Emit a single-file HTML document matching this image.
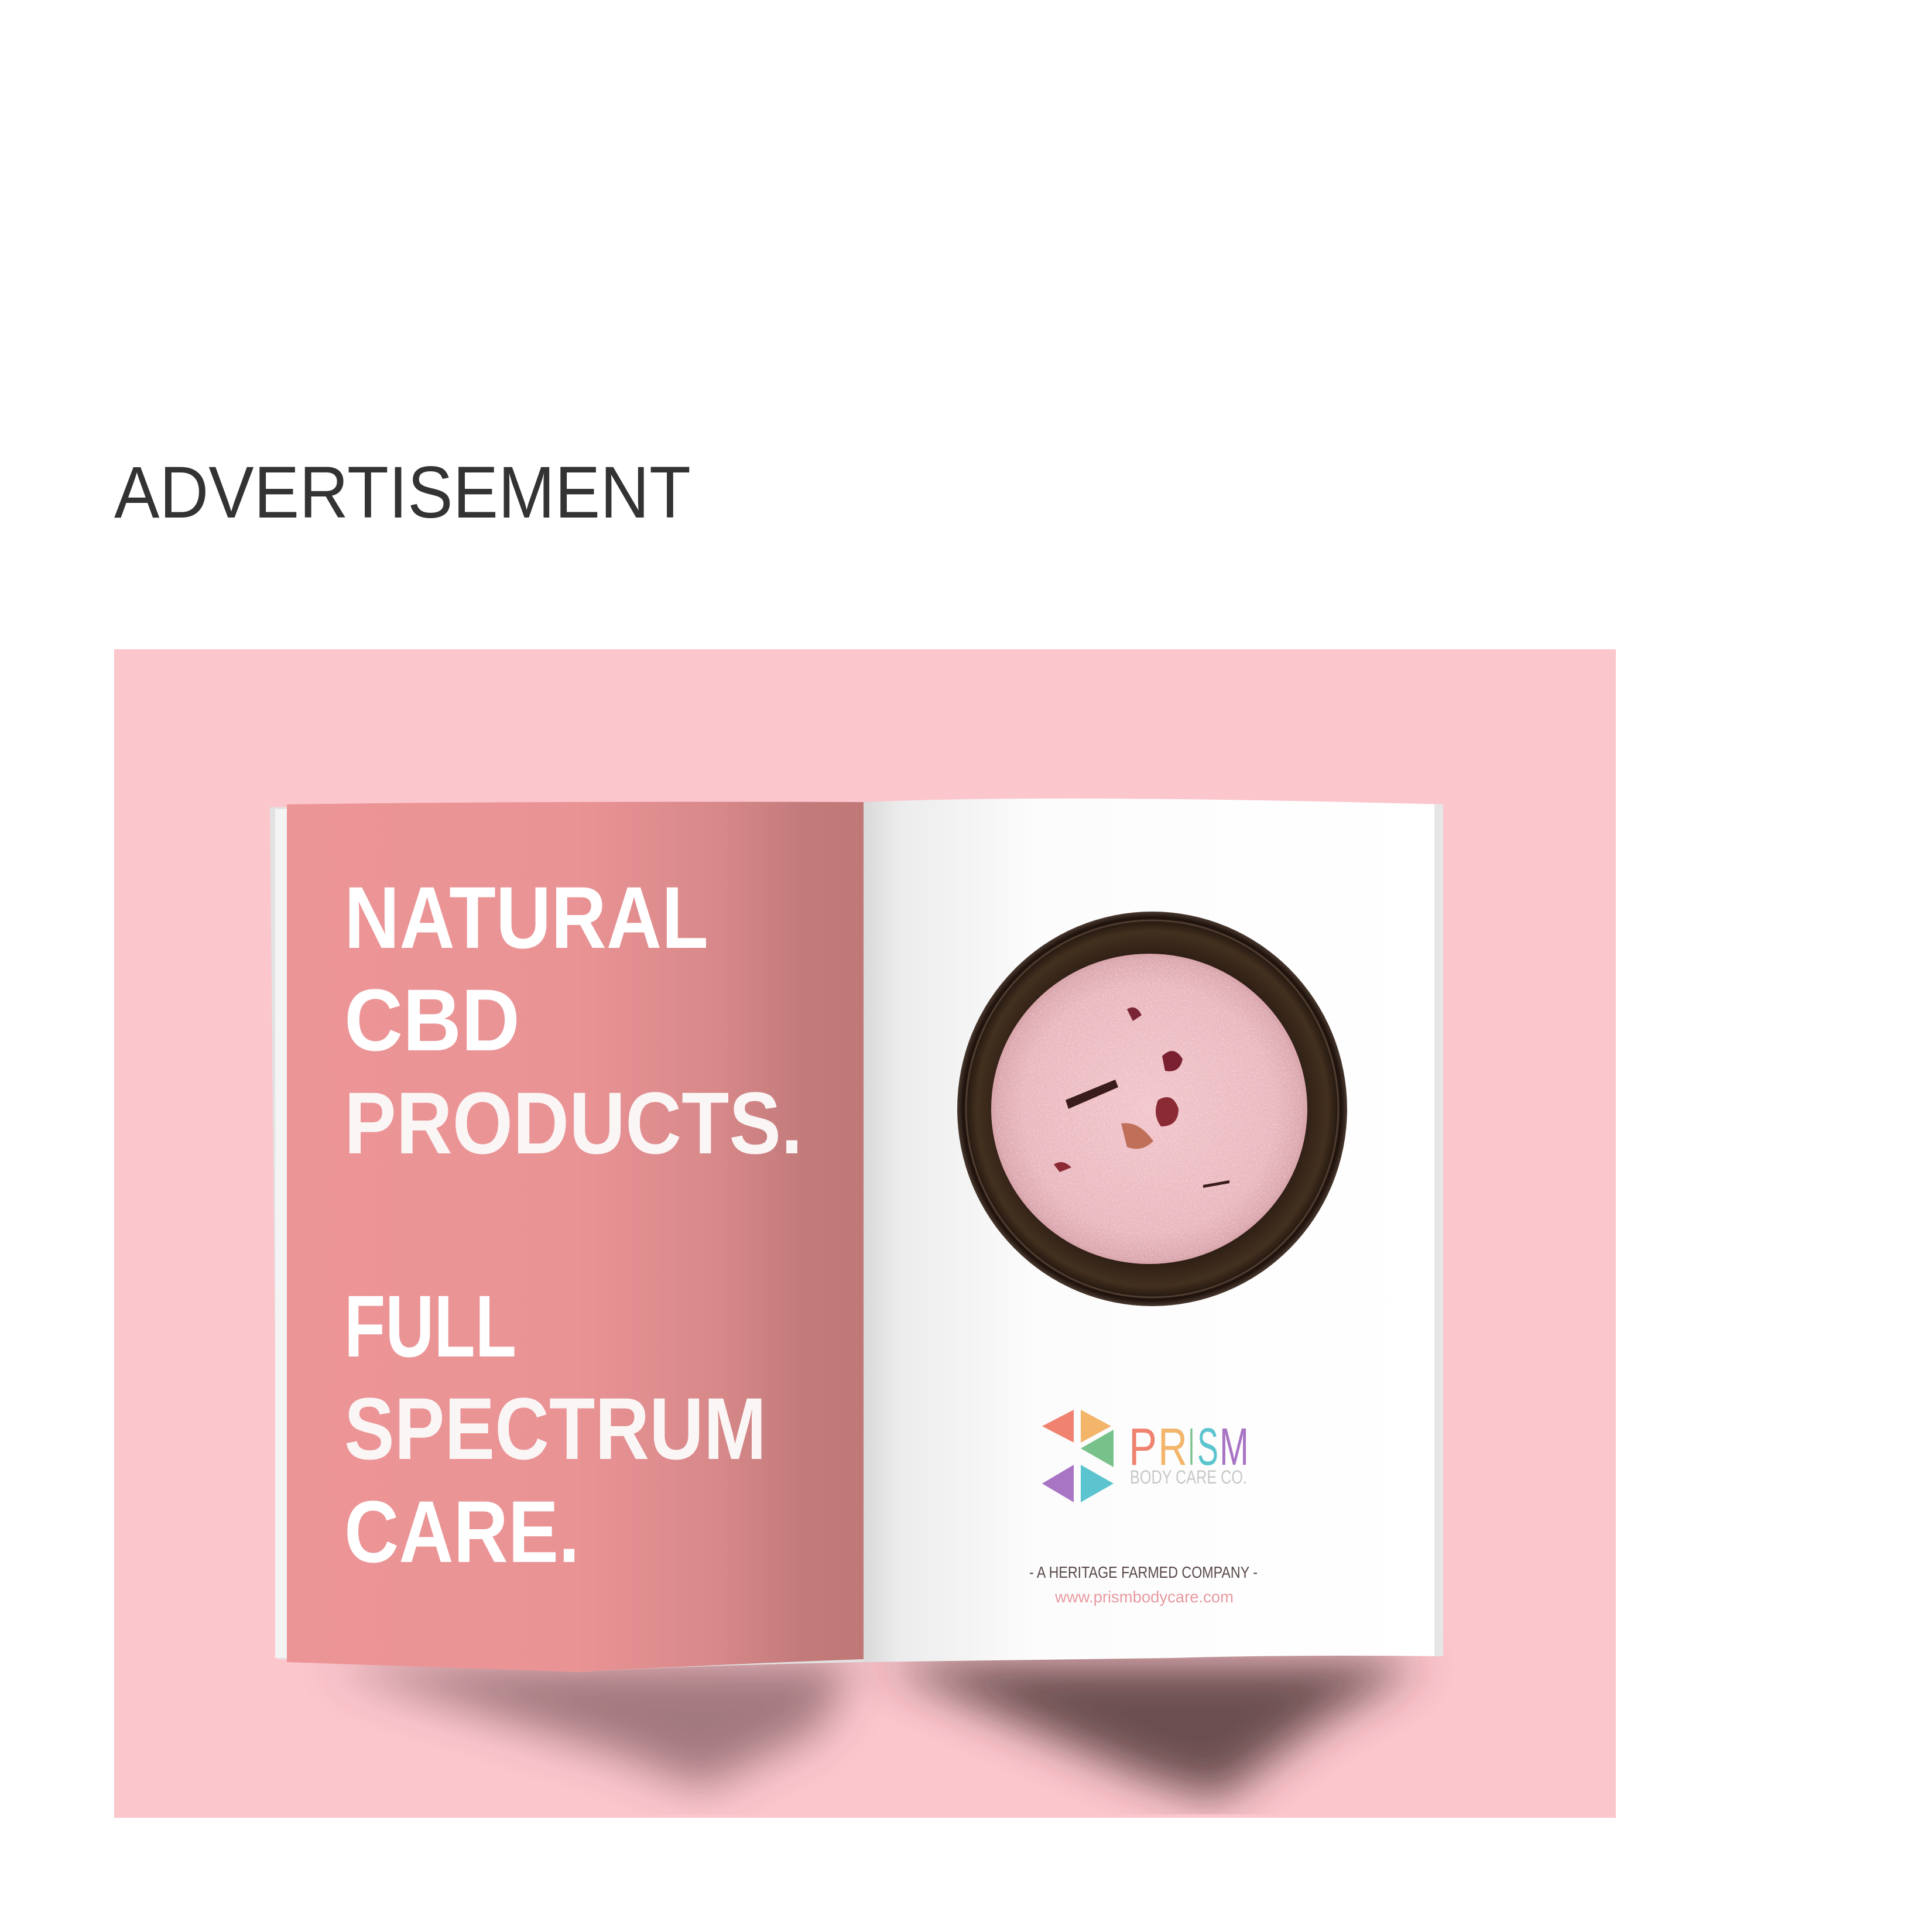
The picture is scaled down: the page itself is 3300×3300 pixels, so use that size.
<!DOCTYPE html>
<html><head><meta charset="utf-8"><style>
html,body{margin:0;padding:0;background:#fff;width:3300px;height:3300px;overflow:hidden}
svg{display:block}
</style></head><body>
<svg width="3300" height="3300" viewBox="0 0 3300 3300" xmlns="http://www.w3.org/2000/svg">
<defs>
<linearGradient id="lp" x1="0" x2="1" y1="0" y2="0">
<stop offset="0" stop-color="#ec9597"/><stop offset="0.5" stop-color="#ea9395"/><stop offset="0.75" stop-color="#d78889"/><stop offset="0.9" stop-color="#c27a7a"/><stop offset="1" stop-color="#c07877"/>
</linearGradient>
<linearGradient id="rp" x1="0" x2="1" y1="0" y2="0">
<stop offset="0" stop-color="#d9d9d9"/><stop offset="0.06" stop-color="#ececec"/><stop offset="0.3" stop-color="#fcfcfc"/><stop offset="1" stop-color="#ffffff"/>
</linearGradient>
<radialGradient id="salt" cx="0.5" cy="0.5" r="0.5">
<stop offset="0" stop-color="#f2c6cc"/><stop offset="0.8" stop-color="#eab9c0"/><stop offset="1" stop-color="#d9a6ad"/>
</radialGradient>
<radialGradient id="bowl" cx="0.5" cy="0.5" r="0.5">
<stop offset="0.75" stop-color="#2a1a12"/><stop offset="0.9" stop-color="#43301f"/><stop offset="0.97" stop-color="#1e120c"/><stop offset="1" stop-color="#4a3a30"/>
</radialGradient>
<filter id="b1" x="-50%" y="-50%" width="200%" height="200%"><feGaussianBlur stdDeviation="38"/></filter>
<filter id="noise"><feTurbulence type="fractalNoise" baseFrequency="0.35" numOctaves="2" seed="3"/><feColorMatrix values="0 0 0 0 1  0 0 0 0 1  0 0 0 0 1  0 0 0 1.2 -0.55"/></filter>
<clipPath id="saltclip"><ellipse cx="1963" cy="1900" rx="263" ry="260"/></clipPath>
<clipPath id="bg"><rect x="195" y="1109" width="2565" height="1996"/></clipPath>
</defs>

<text x="195" y="884" font-family="Liberation Sans, sans-serif" font-size="125" fill="#333" textLength="985" lengthAdjust="spacingAndGlyphs">ADVERTISEMENT</text>

<rect x="195" y="1109" width="2565" height="1996" fill="#fcc6cd"/>

<g transform="translate(0,-6)">
<!-- shadows -->
<g clip-path="url(#bg)">
<path d="M560 2850 L1460 2845 L1400 2960 L1200 3060 L1050 3000 Z" fill="#5a3a3f" opacity="0.55" filter="url(#b1)"/>
<path d="M1500 2845 L2430 2845 L2250 2950 L2080 3080 L1950 3040 Z" fill="#3a2528" opacity="0.75" filter="url(#b1)"/>
</g>

<!-- left page -->
<path d="M461 1385 L1475 1376 L1475 2845 Q1200 2850 990 2862 L475 2840 Z" fill="#e2e2e2"/>
<path d="M490 1380 Q900 1374 1475 1376 L1475 2840 Q1200 2850 990 2862 L490 2845 Z" fill="url(#lp)"/>
<rect x="470" y="1388" width="20" height="1450" fill="#f4f4f4"/>

<!-- right page -->
<path d="M1475 1376 Q1800 1362 2465 1380 L2465 2835 Q2200 2832 2000 2838 L1475 2845 Z" fill="url(#rp)"/>
<rect x="2450" y="1380" width="15" height="1455" fill="#e6e6e6"/>

<!-- headline -->
<g font-family="Liberation Sans, sans-serif" font-weight="bold" font-size="150" fill="#ffffff">
<text x="588" y="1625" textLength="622" lengthAdjust="spacingAndGlyphs">NATURAL</text>
<text x="588" y="1800" textLength="300" lengthAdjust="spacingAndGlyphs">CBD</text>
<text x="588" y="1976" textLength="783" lengthAdjust="spacingAndGlyphs" fill="#fbf6f6">PRODUCTS.</text>
<text x="588" y="2323" textLength="294" lengthAdjust="spacingAndGlyphs">FULL</text>
<text x="588" y="2498" textLength="721" lengthAdjust="spacingAndGlyphs" fill="#fbf6f6">SPECTRUM</text>
<text x="588" y="2674" textLength="402" lengthAdjust="spacingAndGlyphs">CARE.</text>
</g>

<!-- bowl -->
<ellipse cx="1968" cy="1900" rx="333" ry="337" fill="url(#bowl)"/>
<ellipse cx="1968" cy="1900" rx="318" ry="322" fill="none" stroke="#6b5547" stroke-width="3" opacity="0.6"/>
<ellipse cx="1963" cy="1900" rx="270" ry="265" fill="url(#salt)"/>
<g clip-path="url(#saltclip)"><rect x="1690" y="1635" width="550" height="530" filter="url(#noise)" opacity="0.6"/></g>
<path d="M1820 1885 L1905 1850 L1910 1863 L1825 1900 Z" fill="#3a1c1c"/>
<path d="M1985 1810 q20 -20 35 5 q-5 25 -30 20 z" fill="#7a2030"/>
<path d="M1978 1885 q25 -15 35 15 q0 30 -30 30 q-15 -20 -5 -45 z" fill="#8a2a35"/>
<path d="M1915 1925 q30 -5 55 30 q-20 20 -45 10 z" fill="#c07058"/>
<path d="M1925 1730 q15 -10 25 10 l-15 10 z" fill="#7a2535"/>
<path d="M1800 1995 q15 -10 30 5 l-20 8 z" fill="#8a2a35"/>
<path d="M2055 2030 l45 -8 l0 5 l-45 8 z" fill="#3a1c1c"/>

<!-- logo -->
<g>
<polygon points="1834,2414 1834,2470 1780,2442" fill="#f08270"/>
<polygon points="1846,2414 1846,2470 1898,2442" fill="#f2b56a"/>
<polygon points="1902,2448 1902,2512 1846,2480" fill="#77c28a"/>
<polygon points="1834,2508 1834,2572 1780,2540" fill="#a874c4"/>
<polygon points="1846,2508 1846,2572 1902,2540" fill="#5cc4cf"/>
</g>
<g font-family="Liberation Sans, sans-serif" font-size="90">
<text x="1928" y="2508" fill="#f08270" textLength="48" lengthAdjust="spacingAndGlyphs">P</text>
<text x="1978" y="2508" fill="#f2b56a" textLength="50" lengthAdjust="spacingAndGlyphs">R</text>
<text x="2030" y="2508" fill="#77c28a" textLength="10" lengthAdjust="spacingAndGlyphs">I</text>
<text x="2045" y="2508" fill="#5cc4cf" textLength="36" lengthAdjust="spacingAndGlyphs">S</text>
<text x="2083" y="2508" fill="#a874c4" textLength="50" lengthAdjust="spacingAndGlyphs">M</text>
</g>
<text x="1930" y="2540" font-family="Liberation Sans, sans-serif" font-size="32" fill="#c8c8c8" textLength="200" lengthAdjust="spacingAndGlyphs">BODY CARE CO.</text>
<text x="1758" y="2701" font-family="Liberation Sans, sans-serif" font-size="28" fill="#5a4a4a" textLength="390" lengthAdjust="spacingAndGlyphs">- A HERITAGE FARMED COMPANY -</text>
<text x="1802" y="2743" font-family="Liberation Sans, sans-serif" font-size="28" fill="#e89aa0" textLength="305" lengthAdjust="spacingAndGlyphs">www.prismbodycare.com</text>
</g>
</svg>
</body></html>
